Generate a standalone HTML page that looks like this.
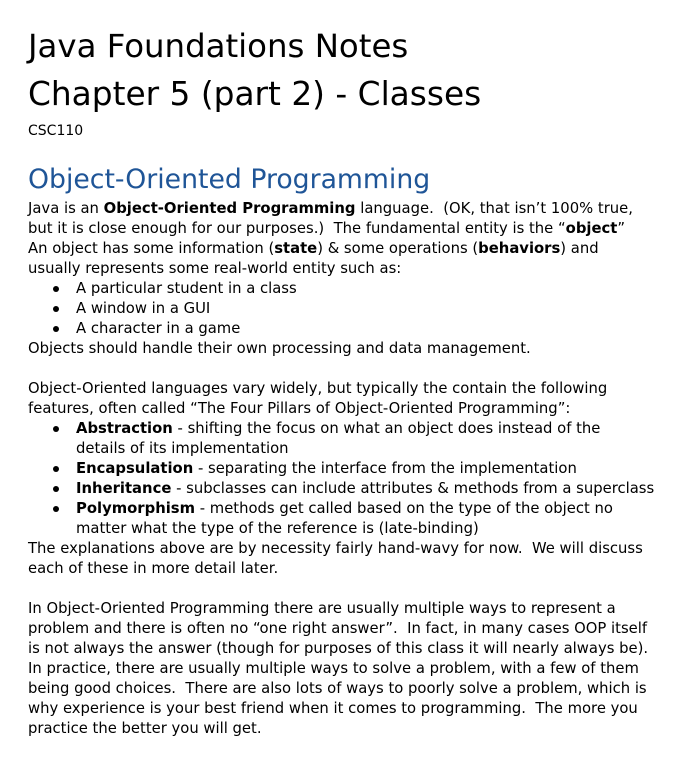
<!DOCTYPE html>
<html><head><meta charset="utf-8"><style>
html,body{margin:0;padding:0;background:#fff;width:699px;height:759px;overflow:hidden}
body{font-family:"DejaVu Sans","Liberation Sans",sans-serif;color:#000;position:relative}
.t{position:absolute;left:28px;font-size:32.4px;line-height:48px;white-space:pre}
.c{position:absolute;left:28px;top:121px;font-size:14px;line-height:20px}
.h{position:absolute;left:28px;top:160px;font-size:26.7px;line-height:40px;color:#1f5597;white-space:pre}
.b{position:absolute;left:28px;top:199px;font-size:14.8px;line-height:20px}
.b div{height:20px;white-space:pre}
.li{position:relative;padding-left:48px}
.li:before{content:"";position:absolute;left:25px;top:7px;width:6px;height:6px;border-radius:50%;background:#000}
.in{padding-left:48px}
</style></head><body>
<div class="t" style="top:22px">Java Foundations Notes</div>
<div class="t" style="top:70px;font-size:32.8px">Chapter 5 (part 2) - Classes</div>
<div class="c">CSC110</div>
<div class="h">Object-Oriented Programming</div>
<div class="b"><div>Java is an <b>Object-Oriented Programming</b> language.  (OK, that isn’t 100% true,</div><div>but it is close enough for our purposes.)  The fundamental entity is the “<b>object</b>”</div><div>An object has some information (<b>state</b>) &amp; some operations (<b>behaviors</b>) and</div><div>usually represents some real-world entity such as:</div><div class="li">A particular student in a class</div><div class="li">A window in a GUI</div><div class="li">A character in a game</div><div>Objects should handle their own processing and data management.</div><div></div><div>Object-Oriented languages vary widely, but typically the contain the following</div><div>features, often called “The Four Pillars of Object-Oriented Programming”:</div><div class="li"><b>Abstraction</b> - shifting the focus on what an object does instead of the</div><div class="in">details of its implementation</div><div class="li"><b>Encapsulation</b> - separating the interface from the implementation</div><div class="li"><b>Inheritance</b> - subclasses can include attributes &amp; methods from a superclass</div><div class="li"><b>Polymorphism</b> - methods get called based on the type of the object no</div><div class="in">matter what the type of the reference is (late-binding)</div><div>The explanations above are by necessity fairly hand-wavy for now.  We will discuss</div><div>each of these in more detail later.</div><div></div><div>In Object-Oriented Programming there are usually multiple ways to represent a</div><div>problem and there is often no “one right answer”.  In fact, in many cases OOP itself</div><div>is not always the answer (though for purposes of this class it will nearly always be).</div><div>In practice, there are usually multiple ways to solve a problem, with a few of them</div><div>being good choices.  There are also lots of ways to poorly solve a problem, which is</div><div>why experience is your best friend when it comes to programming.  The more you</div><div>practice the better you will get.</div></div>
</body></html>
